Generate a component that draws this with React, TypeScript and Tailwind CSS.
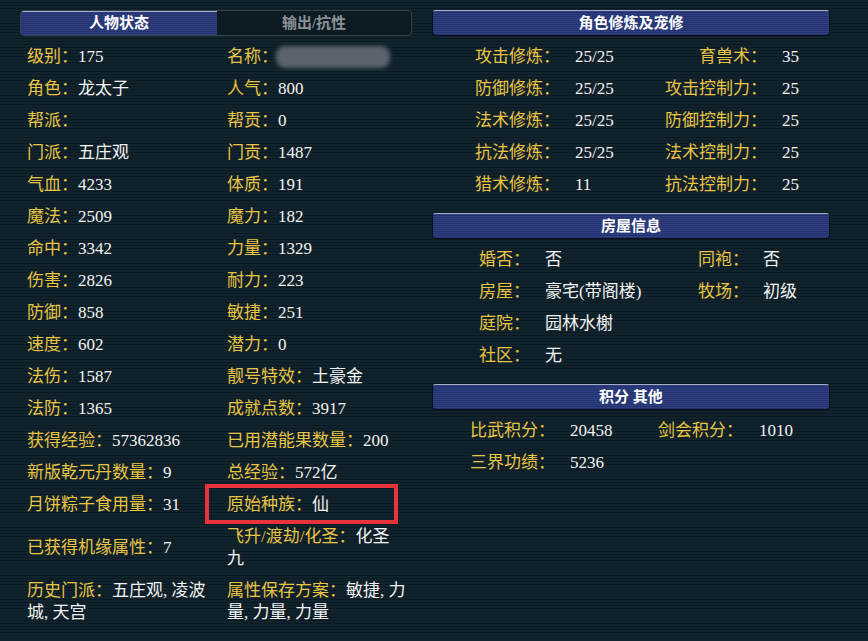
import React from "react";

const FONT = "[font-family:'Liberation_Serif','Noto_Sans_CJK_SC',serif]";

type Pair = { label: string; value?: string };

const leftRows: [Pair, Pair][] = [
  [{ label: "级别：", value: "175" }, { label: "名称：", value: "__blur__" }],
  [{ label: "角色：", value: "龙太子" }, { label: "人气：", value: "800" }],
  [{ label: "帮派：", value: "" }, { label: "帮贡：", value: "0" }],
  [{ label: "门派：", value: "五庄观" }, { label: "门贡：", value: "1487" }],
  [{ label: "气血：", value: "4233" }, { label: "体质：", value: "191" }],
  [{ label: "魔法：", value: "2509" }, { label: "魔力：", value: "182" }],
  [{ label: "命中：", value: "3342" }, { label: "力量：", value: "1329" }],
  [{ label: "伤害：", value: "2826" }, { label: "耐力：", value: "223" }],
  [{ label: "防御：", value: "858" }, { label: "敏捷：", value: "251" }],
  [{ label: "速度：", value: "602" }, { label: "潜力：", value: "0" }],
  [{ label: "法伤：", value: "1587" }, { label: "靓号特效：", value: "土豪金" }],
  [{ label: "法防：", value: "1365" }, { label: "成就点数：", value: "3917" }],
  [{ label: "获得经验：", value: "57362836" }, { label: "已用潜能果数量：", value: "200" }],
  [{ label: "新版乾元丹数量：", value: "9" }, { label: "总经验：", value: "572亿" }],
  [{ label: "月饼粽子食用量：", value: "31" }, { label: "原始种族：", value: "仙" }],
];

const HeaderBar: React.FC<{ title: string }> = ({ title }) => (
  <div className="h-[26px] rounded-[4px] border border-[#0a0d1c] border-t-[#a7adc4] bg-[#2a3a7c] bg-[repeating-linear-gradient(180deg,#2d3e82_0px,#2d3e82_1px,#24336e_1px,#24336e_2px)] flex items-center justify-center text-[15px] font-bold text-white">
    {title}
  </div>
);

const Cell: React.FC<Pair & { boxed?: boolean }> = ({ label, value, boxed }) => (
  <div className="relative flex items-center leading-[22px]">
    <span>
      <span className="text-[#e9c443]">{label}</span>
      {value === "__blur__" ? null : <span className="text-[#f2f2f2]">{value}</span>}
    </span>
    {value === "__blur__" && (
      <span className="ml-[-2px] inline-block h-[22px] w-[114px] rounded-[9px] bg-[#5a646c] blur-[2px]" />
    )}
    {boxed && (
      <div className="absolute -left-[22px] -top-[5px] h-[40px] w-[193px] border-[4px] border-[#e8333b]" />
    )}
  </div>
);

export default function App() {
  return (
    <div
      className={`${FONT} w-[868px] h-[641px] overflow-hidden bg-[#0f2029] bg-[repeating-linear-gradient(180deg,#11242e_0px,#11242e_2px,#0b1a22_2px,#0b1a22_3px)] text-[17px] flex gap-[20px] pl-[20px] pt-[10px]`}
    >
      {/* left panel */}
      <div className="w-[392px] flex flex-col">
        <div className="h-[26px] flex rounded-[4px] border border-[#34434b] bg-[#0c1a22] overflow-hidden text-[15px] font-bold">
          <div className="w-[196px] border-t border-t-[#a7adc4] bg-[#2a3a7c] bg-[repeating-linear-gradient(180deg,#2d3e82_0px,#2d3e82_1px,#24336e_1px,#24336e_2px)] flex items-center justify-center text-white">
            人物状态
          </div>
          <div className="flex-1 flex items-center justify-center text-[#8b9196]">输出/抗性</div>
        </div>
        <div className="mt-[5px] pl-[7px] grid grid-cols-[200px_185px] auto-rows-[32px]">
          {leftRows.map(([a, b], i) => (
            <React.Fragment key={i}>
              <Cell {...a} />
              <Cell {...b} boxed={i === 14} />
            </React.Fragment>
          ))}
        </div>
        <div className="pl-[7px] grid grid-cols-[200px_185px] leading-[22px]">
          <div className="py-[5px] flex items-center">
            <span>
              <span className="text-[#e9c443]">已获得机缘属性：</span>
              <span className="text-[#f2f2f2]">7</span>
            </span>
          </div>
          <div className="py-[5px]">
            <span className="text-[#e9c443]">飞升/渡劫/化圣：</span>
            <span className="text-[#f2f2f2]">
              化圣
              <br />九
            </span>
          </div>
          <div className="py-[5px]">
            <span className="text-[#e9c443]">历史门派：</span>
            <span className="text-[#f2f2f2]">
              五庄观, 凌波
              <br />城, 天宫
            </span>
          </div>
          <div className="py-[5px]">
            <span className="text-[#e9c443]">属性保存方案：</span>
            <span className="text-[#f2f2f2]">
              敏捷, 力
              <br />量, 力量, 力量
            </span>
          </div>
        </div>
      </div>

      {/* right panel */}
      <div className="w-[398px] flex flex-col">
        <HeaderBar title="角色修炼及宠修" />
        <div className="mt-[5px] pl-[43px] grid grid-cols-[100px_88px_104px_auto] auto-rows-[32px] items-center">
          {[
            ["攻击修炼：", "25/25", "育兽术：", "35"],
            ["防御修炼：", "25/25", "攻击控制力：", "25"],
            ["法术修炼：", "25/25", "防御控制力：", "25"],
            ["抗法修炼：", "25/25", "法术控制力：", "25"],
            ["猎术修炼：", "11", "抗法控制力：", "25"],
          ].map((r, i) => (
            <React.Fragment key={i}>
              <span className="text-[#e9c443]">{r[0]}</span>
              <span className="text-[#f2f2f2]">{r[1]}</span>
              <span className="text-[#e9c443] text-right">{r[2]}</span>
              <span className="text-[#f2f2f2] pl-[15px]">{r[3]}</span>
            </React.Fragment>
          ))}
        </div>

        <div className="mt-[12px]">
          <HeaderBar title="房屋信息" />
        </div>
        <div className="mt-[5px] pl-[47px] grid grid-cols-[66px_153px_65px_auto] auto-rows-[32px] items-center">
          {[
            ["婚否：", "否", "同袍：", "否"],
            ["房屋：", "豪宅(带阁楼)", "牧场：", "初级"],
            ["庭院：", "园林水榭", "", ""],
            ["社区：", "无", "", ""],
          ].map((r, i) => (
            <React.Fragment key={i}>
              <span className="text-[#e9c443]">{r[0]}</span>
              <span className="text-[#f2f2f2]">{r[1]}</span>
              <span className="text-[#e9c443]">{r[2]}</span>
              <span className="text-[#f2f2f2]">{r[3]}</span>
            </React.Fragment>
          ))}
        </div>

        <div className="mt-[12px]">
          <HeaderBar title="积分 其他" />
        </div>
        <div className="mt-[5px] pl-[38px] grid grid-cols-[100px_88px_101px_auto] auto-rows-[32px] items-center">
          <span className="text-[#e9c443]">比武积分：</span>
          <span className="text-[#f2f2f2]">20458</span>
          <span className="text-[#e9c443]">剑会积分：</span>
          <span className="text-[#f2f2f2]">1010</span>
          <span className="text-[#e9c443]">三界功绩：</span>
          <span className="text-[#f2f2f2]">5236</span>
        </div>
      </div>
    </div>
  );
}
